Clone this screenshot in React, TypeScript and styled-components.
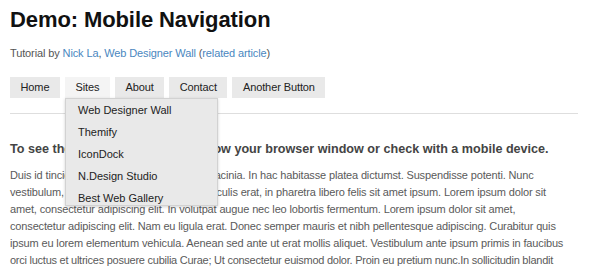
import React from "react";
import styled, { createGlobalStyle } from "styled-components";

const Global = createGlobalStyle`
  html, body { margin: 0; padding: 0; background: #fff; }
  body { font-family: "Liberation Sans", Arial, Helvetica, sans-serif; }
`;

const Page = styled.div`
  width: 568px;
  padding: 0 0 0 10px;
  overflow: hidden;
  height: 267px;
`;

const Title = styled.h1`
  margin: 0;
  padding-top: 7px;
  font-size: 22px;
  line-height: 26px;
  font-weight: bold;
  color: #111;
  letter-spacing: -0.1px;
`;

const Byline = styled.p`
  margin: 13px 0 0;
  font-size: 11px;
  line-height: 14px;
  color: #555;
  letter-spacing: -0.12px;
`;

const Link = styled.a`
  color: #4a87c0;
  text-decoration: none;
`;

const Nav = styled.ul`
  list-style: none;
  margin: 17px 0 0;
  padding: 0 0 15px;
  display: flex;
  gap: 5px;
  border-bottom: 1px solid #dedede;
`;

const NavItem = styled.li`
  position: relative;
`;

const NavButton = styled.a<{ $active?: boolean }>`
  display: block;
  height: 21px;
  line-height: 21px;
  padding: 0 10.5px;
  font-size: 11px;
  letter-spacing: -0.1px;
  color: #222;
  text-decoration: none;
  background: ${(p) => (p.$active ? "#f4f4f4" : "#e9e9e9")};
`;

const Dropdown = styled.ul`
  position: absolute;
  left: 0;
  top: 21px;
  width: 151px;
  height: 106px;
  margin: 0;
  padding: 0;
  list-style: none;
  background: #e9e9e9;
  border: 1px solid #d2d2d2;
  box-shadow: 0 1px 3px rgba(0, 0, 0, 0.18);
  z-index: 5;
`;

const DropItem = styled.li`
  height: 22px;
  line-height: 22px;
  padding-left: 12px;
  font-size: 11px;
  color: #222;
`;

const Heading = styled.h3`
  margin: 27px 0 0;
  font-size: 12.6px;
  line-height: 16px;
  font-weight: bold;
  color: #444;
`;

const Body = styled.div`
  margin: 10px 0 0;
  font-size: 11px;
  line-height: 17.1px;
  color: #5a5a5a;
`;

const Line = styled.div<{ $squeeze?: number }>`
  white-space: nowrap;
  letter-spacing: ${(p) => p.$squeeze ?? -0.15}px;
`;

const lines = [
  "Duis id tincidunt erat. Praesent eget lectus lacinia. In hac habitasse platea dictumst. Suspendisse potenti. Nunc",
  "vestibulum, sapien vel dictum aliquet, nisl iaculis erat, in pharetra libero felis sit amet ipsum. Lorem ipsum dolor sit",
  "amet, consectetur adipiscing elit. In volutpat augue nec leo lobortis fermentum. Lorem ipsum dolor sit amet,",
  "consectetur adipiscing elit. Nam eu ligula erat. Donec semper mauris et nibh pellentesque adipiscing. Curabitur quis",
  "ipsum eu lorem elementum vehicula. Aenean sed ante ut erat mollis aliquet. Vestibulum ante ipsum primis in faucibus",
  "orci luctus et ultrices posuere cubilia Curae; Ut consectetur euismod dolor. Proin eu pretium nunc.In sollicitudin blandit",
];

const sites = [
  "Web Designer Wall",
  "Themify",
  "IconDock",
  "N.Design Studio",
  "Best Web Gallery",
];

export default function App() {
  return (
    <>
      <Global />
      <Page>
        <Title>Demo: Mobile Navigation</Title>
        <Byline>
          Tutorial by <Link href="#">Nick La</Link>, <Link href="#">Web Designer Wall</Link> (
          <Link href="#">related article</Link>)
        </Byline>
        <Nav>
          <NavItem>
            <NavButton href="#">Home</NavButton>
          </NavItem>
          <NavItem>
            <NavButton href="#" $active>
              Sites
            </NavButton>
            <Dropdown>
              {sites.map((s) => (
                <DropItem key={s}>{s}</DropItem>
              ))}
            </Dropdown>
          </NavItem>
          <NavItem>
            <NavButton href="#">About</NavButton>
          </NavItem>
          <NavItem>
            <NavButton href="#">Contact</NavButton>
          </NavItem>
          <NavItem>
            <NavButton href="#">Another Button</NavButton>
          </NavItem>
        </Nav>
        <Heading>
          To see the mobile navigation, narrow your browser window or check with a mobile device.
        </Heading>
        <Body>
          {lines.map((l, i) => (
            <Line key={i} $squeeze={i === 5 ? -0.25 : -0.15}>
              {l}
            </Line>
          ))}
        </Body>
      </Page>
    </>
  );
}
